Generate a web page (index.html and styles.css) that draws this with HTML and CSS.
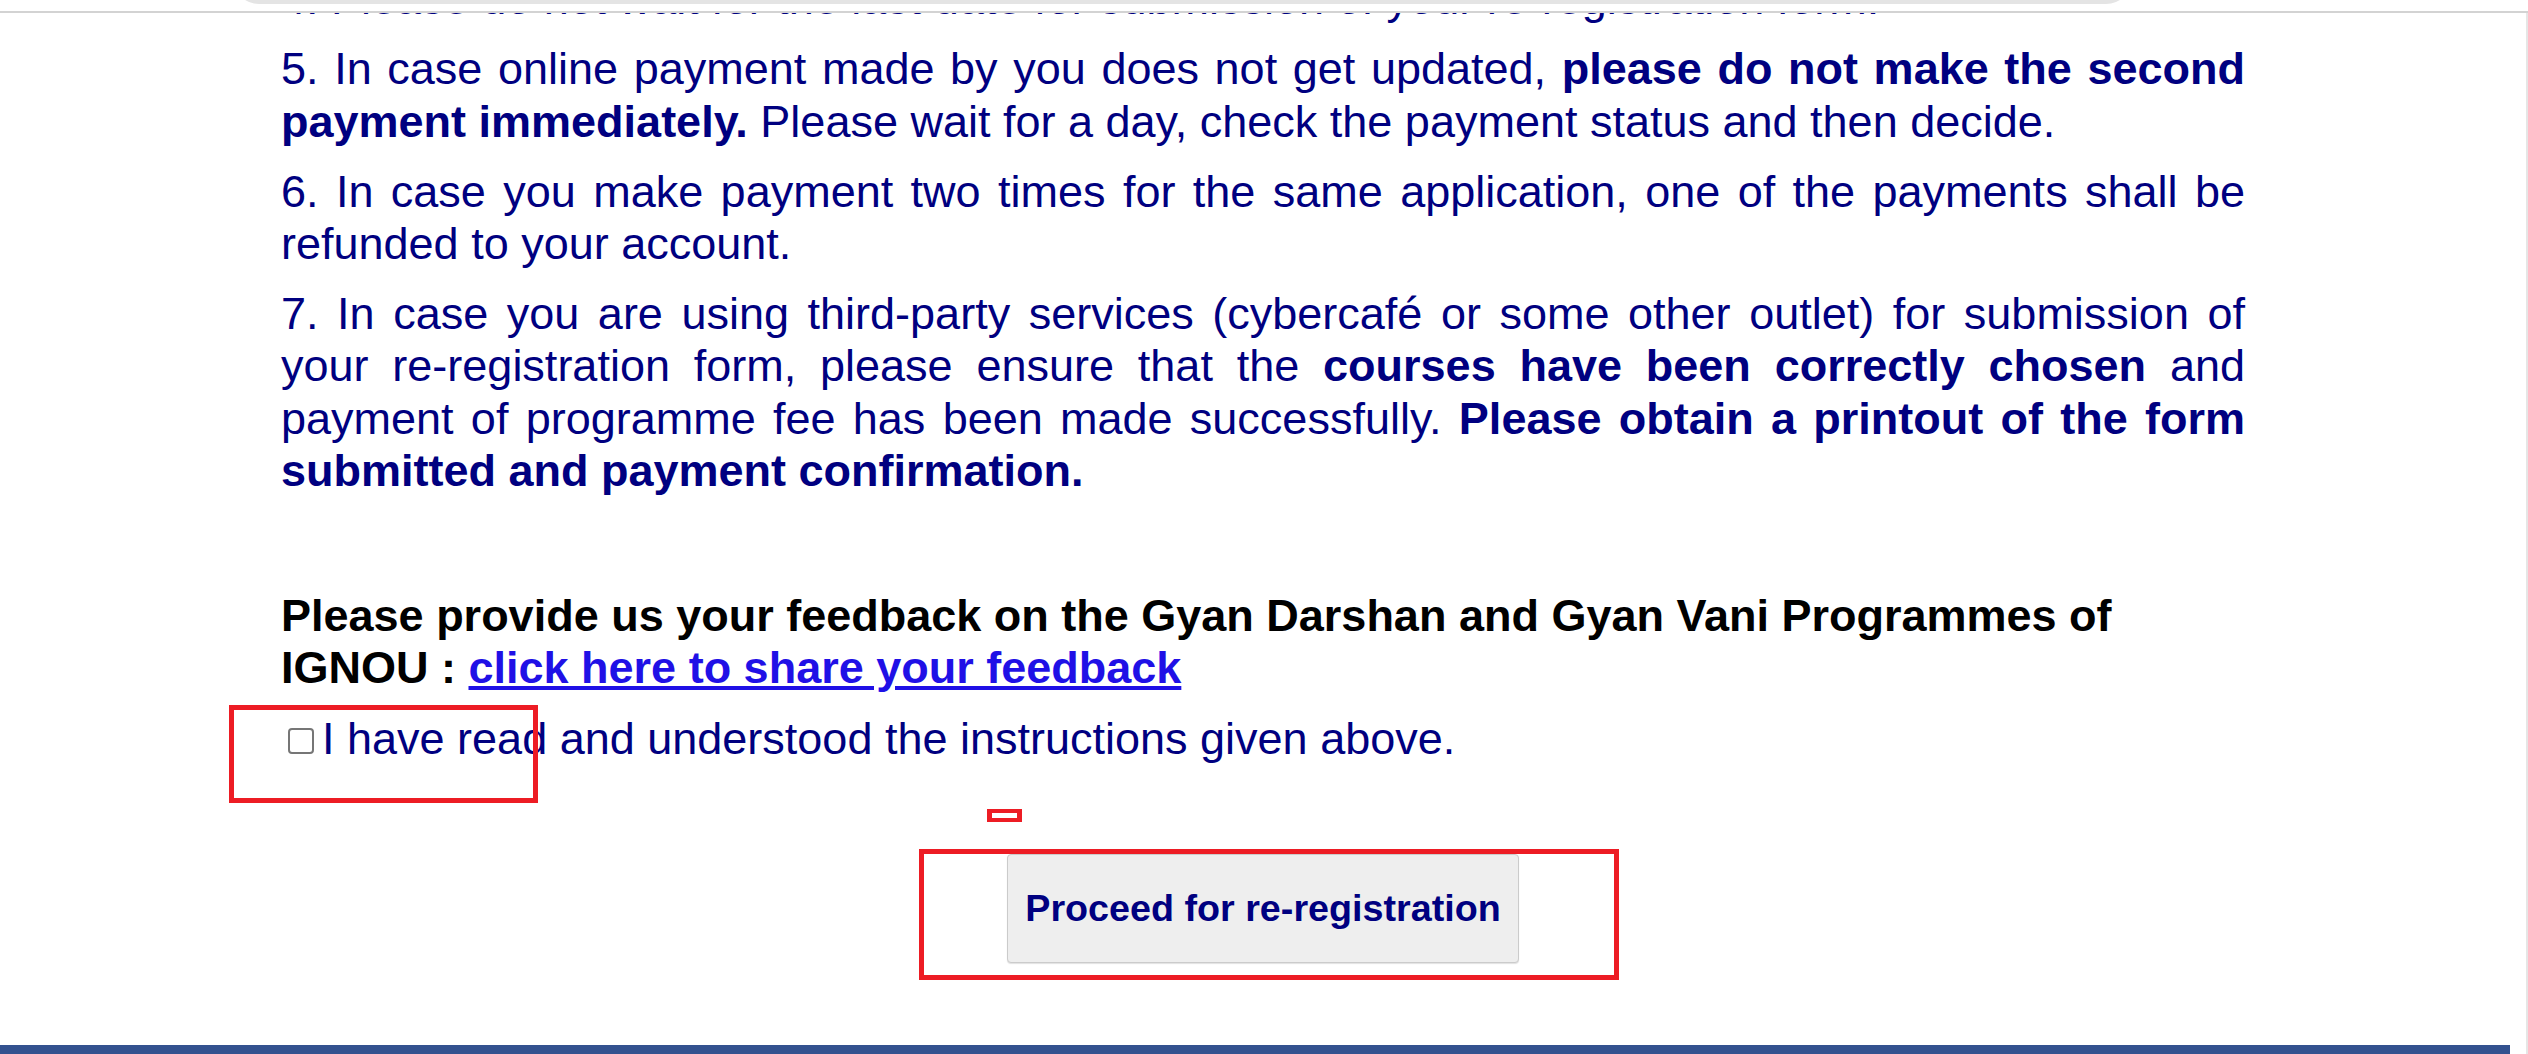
FILE: index.html
```html
<!DOCTYPE html>
<html lang="en">
<head>
<meta charset="utf-8">
<title>Re-registration Instructions</title>
<link rel="stylesheet" href="styles.css">
</head>
<body>
<div class="page">
  <div class="topbar"><div class="topbar-tab"></div></div>

  <main class="content">
    <p class="note">4. Please do not wait for the last date for submission of your re-registration form.</p>
    <p class="note">5. In case online payment made by you does not get updated, <b>please do not make the second payment immediately.</b> Please wait for a day, check the payment status and then decide.</p>
    <p class="note">6. In case you make payment two times for the same application, one of the payments shall be refunded to your account.</p>
    <p class="note">7. In case you are using third-party services (cybercafé or some other outlet) for submission of your re-registration form, please ensure that the <b>courses have been correctly chosen</b> and payment of programme fee has been made successfully. <b>Please obtain a printout of the form submitted and payment confirmation.</b></p>

    <p class="feedback">Please provide us your feedback on the Gyan Darshan and Gyan Vani Programmes of IGNOU : <a href="#" class="feedback-link">click here to share your feedback</a></p>

    <p class="agree"><input type="checkbox" class="agree-box" id="agree"><label for="agree">I have read and understood the instructions given above.</label></p>

    <div class="actions">
      <button type="button" class="proceed">Proceed for re-registration</button>
    </div>
  </main>

  <footer class="footer"></footer>

  <div class="mark mark-check"></div>
  <div class="mark mark-small"></div>
  <div class="mark mark-button"></div>
</div>
</body>
</html>
```

FILE: styles.css
```css
html, body {
  margin: 0;
  padding: 0;
  background: #ffffff;
  overflow: hidden;
}

body {
  font-family: "Liberation Sans", Arial, sans-serif;
}

.page {
  position: relative;
  display: flow-root;
  width: 2526px;
  min-height: 1054px;
  border-right: 2px solid #e6e6e6;
}

.topbar {
  position: fixed;
  top: 0;
  left: 0;
  right: 0;
  height: 11px;
  background: #ffffff;
  border-bottom: 2px solid #d3d3d3;
  overflow: hidden;
  z-index: 5;
}

.topbar-tab {
  position: absolute;
  top: -22px;
  left: 233px;
  width: 1899px;
  height: 26px;
  background: #e4e4e4;
  border-radius: 0 0 26px 26px;
}

.content {
  width: 1964px;
  margin: -26.7px auto 0;
  color: #000080;
}

.note {
  margin: 0 0 17.5px;
  font-size: 45px;
  line-height: 52.4px;
  text-align: justify;
}

.note b {
  font-weight: bold;
}

.feedback {
  margin: 92.5px 0 0;
  font-size: 45px;
  line-height: 52.4px;
  font-weight: bold;
  color: #000000;
}

.feedback-link {
  color: #1f10e6;
  text-decoration: underline;
}

.agree {
  margin: 18.5px 0 0;
  font-size: 45px;
  line-height: 52.4px;
  color: #000080;
}

.agree-box {
  appearance: none;
  -webkit-appearance: none;
  display: inline-block;
  box-sizing: border-box;
  width: 26px;
  height: 26px;
  margin: 0 8px 0 7px;
  border: 2px solid #767676;
  border-radius: 4px;
  background: #ffffff;
  vertical-align: baseline;
}

.actions {
  display: flex;
  justify-content: center;
  margin-top: 88px;
}

.proceed {
  font-family: "Liberation Sans", Arial, sans-serif;
  font-size: 37.7px;
  font-weight: bold;
  color: #000080;
  background: #eeeeee;
  border: 1px solid #cbcbcb;
  border-radius: 4px;
  box-shadow: 0 1px 1px rgba(0, 0, 0, 0.12);
  padding: 32px 17px;
  line-height: normal;
}

.footer {
  margin-top: 82px;
  margin-right: 16px;
  height: 60px;
  background: #33528f;
}

.mark {
  position: absolute;
  box-sizing: border-box;
  border: 5px solid #ed1c24;
  pointer-events: none;
}

.mark-check {
  left: 229px;
  top: 705px;
  width: 309px;
  height: 98px;
}

.mark-small {
  left: 987px;
  top: 809px;
  width: 35px;
  height: 13px;
  border-width: 4px 5px;
}

.mark-button {
  left: 919px;
  top: 849px;
  width: 700px;
  height: 131px;
}
```
